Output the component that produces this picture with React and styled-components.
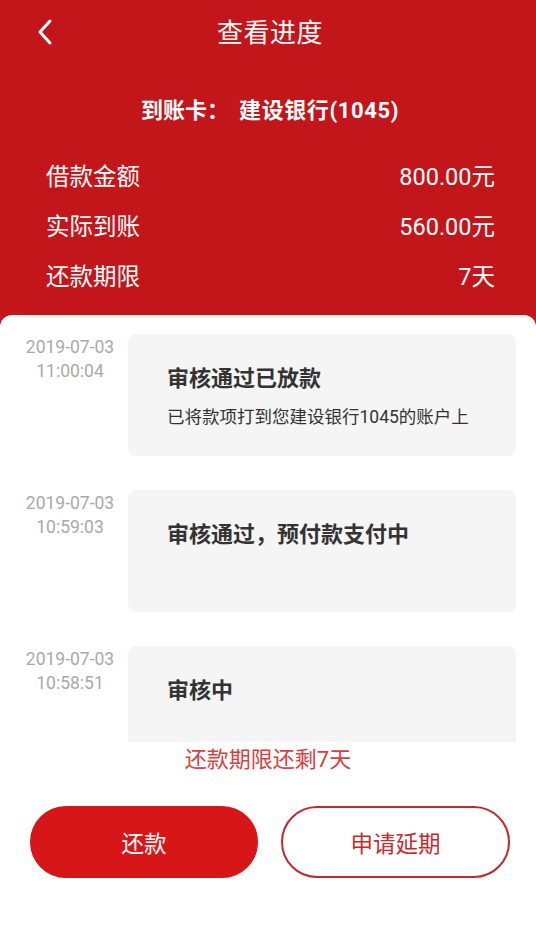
import styled, { createGlobalStyle } from "styled-components";

const GlobalStyle = createGlobalStyle`
  body {
    margin: 0;
    background: #ffffff;
    font-family: Roboto, "Liberation Sans", "Noto Sans CJK SC", sans-serif;
  }
`;

const records = [
  {
    date: "2019-07-03",
    time: "11:00:04",
    title: "审核通过已放款",
    desc: "已将款项打到您建设银行1045的账户上",
  },
  { date: "2019-07-03", time: "10:59:03", title: "审核通过，预付款支付中" },
  { date: "2019-07-03", time: "10:58:51", title: "审核中" },
];

const summary = [
  { label: "借款金额", value: "800.00元" },
  { label: "实际到账", value: "560.00元" },
  { label: "还款期限", value: "7天" },
];

const BackIcon = () => (
  <svg width="18" height="26" viewBox="0 0 18 26" fill="none">
    <path
      d="M14 2 L4 13 L14 24"
      stroke="#ffffff"
      strokeWidth="3"
      strokeLinecap="round"
      strokeLinejoin="round"
    />
  </svg>
);

export default function App() {
  return (
    <>
      <GlobalStyle />
      <Page>
        <Header>
          <NavBar>
            <BackButton aria-label="返回">
              <BackIcon />
            </BackButton>
            <NavTitle>查看进度</NavTitle>
          </NavBar>
          <CardLabel>
            到账卡：<BankName>建设银行(1045)</BankName>
          </CardLabel>
          <Summary>
            {summary.map((item) => (
              <SummaryRow key={item.label}>
                <span>{item.label}</span>
                <span>{item.value}</span>
              </SummaryRow>
            ))}
          </Summary>
        </Header>

        <Panel>
          <Timeline>
            {records.map((r) => (
              <Record key={r.time}>
                <Stamp>
                  <div>{r.date}</div>
                  <div>{r.time}</div>
                </Stamp>
                <RecordCard>
                  <RecordTitle>{r.title}</RecordTitle>
                  {r.desc && <RecordDesc>{r.desc}</RecordDesc>}
                </RecordCard>
              </Record>
            ))}
          </Timeline>
          <Notice>还款期限还剩7天</Notice>
          <Actions>
            <ActionButton $primary>还款</ActionButton>
            <ActionButton>申请延期</ActionButton>
          </Actions>
        </Panel>
      </Page>
    </>
  );
}

const Page = styled.div`
  width: 536px;
  min-height: 925px;
  background: #ffffff;
`;

const Header = styled.header`
  background: #c3161a;
  color: #ffffff;
  padding-bottom: 27px;
`;

const NavBar = styled.div`
  position: relative;
  height: 66px;
  display: flex;
  align-items: center;
  justify-content: center;
`;

const BackButton = styled.button`
  position: absolute;
  left: 36px;
  top: 19px;
  padding: 0;
  border: none;
  background: none;
  display: flex;
`;

const NavTitle = styled.h1`
  margin: 0;
  font-size: 26px;
  font-weight: normal;
  line-height: 30px;
  letter-spacing: 0.5px;
  padding-left: 4px;
`;

const CardLabel = styled.div`
  margin-top: 30px;
  font-size: 22px;
  font-weight: bold;
  line-height: 30px;
  text-align: center;
  padding-left: 4px;
`;

const BankName = styled.span`
  margin-left: 10px;
  letter-spacing: 0.6px;
`;

const Summary = styled.div`
  margin-top: 24px;
  padding: 0 41px 0 46px;
`;

const SummaryRow = styled.div`
  display: flex;
  justify-content: space-between;
  align-items: center;
  height: 50px;
  font-size: 23.5px;
`;

const Panel = styled.section`
  position: relative;
  margin-top: -12px;
  background: #ffffff;
  border-radius: 12px 12px 0 0;
  padding-top: 19px;
`;

const Timeline = styled.div`
  height: 408px;
  overflow: hidden;
  padding-right: 20px;
`;

const Record = styled.div`
  display: flex;
  align-items: flex-start;
  padding-left: 20px;
  margin-bottom: 34px;
`;

const Stamp = styled.div`
  width: 100px;
  flex-shrink: 0;
  padding-top: 1px;
  font-size: 17.5px;
  line-height: 24px;
  color: #a9a9a9;
  text-align: center;
`;

const RecordCard = styled.div`
  flex: 1;
  margin-left: 8px;
  height: 122px;
  box-sizing: border-box;
  padding: 30px 20px 0 39px;
  background: #f5f5f5;
  border-radius: 8px;
`;

const RecordTitle = styled.div`
  font-size: 22px;
  font-weight: bold;
  line-height: 30px;
  color: #333333;
`;

const RecordDesc = styled.div`
  margin-top: 10px;
  font-size: 17.5px;
  line-height: 26px;
  color: #333333;
`;

const Notice = styled.div`
  margin-top: 3px;
  font-size: 22px;
  line-height: 30px;
  color: #d7403e;
  text-align: center;
`;

const Actions = styled.div`
  display: grid;
  grid-template-columns: 228px 229px;
  column-gap: 23px;
  padding: 31px 26px 0 30px;
`;

const ActionButton = styled.button`
  height: 72px;
  border-radius: 36px;
  font-family: inherit;
  font-size: 22.5px;
  box-sizing: border-box;
  border: 2px solid ${(p) => (p.$primary ? "#d71618" : "#c0292b")};
  background: ${(p) => (p.$primary ? "#d71618" : "#ffffff")};
  color: ${(p) => (p.$primary ? "#ffffff" : "#c62a2a")};
`;
